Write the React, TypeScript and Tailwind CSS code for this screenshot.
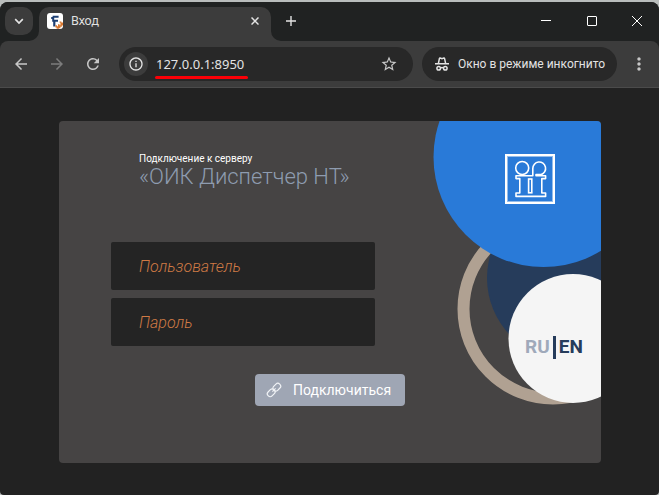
import React, { useState } from 'react';
import {
  MdArrowBack,
  MdArrowForward,
  MdInfoOutline,
  MdMoreVert,
  MdRefresh,
  MdStarBorder,
} from 'react-icons/md';

type Lang = 'ru' | 'en';

function Favicon() {
  return (
    <svg viewBox="0 0 16 16" className="h-4 w-4 shrink-0" aria-hidden="true">
      <rect width="16" height="16" rx="3" fill="#ffffff" />
      <path d="M5.6 2.8h6v2H7.2v2H11v2H8.4v4.6H6.2V8.8H5.2V6H4.2V4h1.4z" fill="#1d3f73" />
      <path d="M8.4 12.2h1.6v1h1v-2h1.6v1h.8v-2.4h-.8V8.6h1.8v1h1.6v3h-1.2v1.2h-1.4v1.4h-1.4v.6H9.6v-1.2H8.4z" fill="#d9772e" />
    </svg>
  );
}

function IncognitoIcon() {
  return (
    <svg viewBox="0 0 14 14" className="h-3.5 w-3.5 shrink-0" fill="none" stroke="currentColor" strokeWidth="1.5" aria-hidden="true">
      <path d="M3.4 6.4L4.4 1.6Q4.6 1 5.2 1.1L7 1.6L8.8 1.1Q9.4 1 9.6 1.6L10.6 6.4" />
      <path d="M0 6.8h14" />
      <circle cx="3.7" cy="11.2" r="1.8" />
      <circle cx="10.3" cy="11.2" r="1.8" />
      <path d="M5.5 10.9q1.5-.9 3 0" />
    </svg>
  );
}

function CompanyLogo() {
  return (
    <svg viewBox="0 0 50 50" className="h-[50px] w-[50px]" fill="none" stroke="#ffffff" aria-hidden="true">
      <rect x="1" y="1" width="48" height="48" strokeWidth="2" />
      <rect x="2.5" y="2.5" width="45" height="45" strokeWidth="1" opacity="0.5" />
      <circle cx="17.2" cy="14" r="6.5" strokeWidth="1.6" />
      <path
        strokeWidth="1.6"
        strokeLinejoin="round"
        d="M31 20.5H36.2A6.4 6.4 0 1 0 27.8 14.5V21.8H11V24.6H14.8V39H11V42.4H40.6V39H36.8V24.6H40.6V21.8H31Z"
      />
      <path d="M31 21h6.5" strokeWidth="2.2" />
      <rect x="23.6" y="25" width="3.2" height="13.8" strokeWidth="1.6" />
    </svg>
  );
}

function ChainIcon() {
  return (
    <svg viewBox="0 0 16 16" className="h-4 w-4 shrink-0" fill="none" stroke="#f1f3f6" strokeWidth="1.2" aria-hidden="true">
      <rect x="6.6" y="2.4" width="8.4" height="5.6" rx="2.6" transform="rotate(-45 10.8 5.2)" />
      <rect x="1" y="8" width="8.4" height="5.6" rx="2.6" transform="rotate(-45 5.2 10.8)" />
      <path d="M6.4 9.6l3.2-3.2" />
    </svg>
  );
}

function TitleBar() {
  return (
    <div className="flex h-[39px] items-start bg-[#202222] pl-[5px] text-[#e3e3e3]">
      <button className="mt-[5px] flex h-7 w-7 items-center justify-center rounded-[10px] bg-[#3c3c3c]" aria-label="Поиск вкладок">
        <svg viewBox="0 0 10 10" className="h-2.5 w-2.5" fill="none" stroke="currentColor" strokeWidth="1.7">
          <path d="M1.2 3.2L5 7l3.8-3.8" />
        </svg>
      </button>
      <div className="relative mt-[5px] ml-[6px] flex h-[34px] w-[232px] items-center rounded-t-[10px] bg-[#3c3c3c] pr-2 pb-[6px] pl-2">
        <svg viewBox="0 0 10 10" className="absolute bottom-0 -left-2.5 h-2.5 w-2.5" aria-hidden="true">
          <path d="M10 0v10H0A10 10 0 0 0 10 0z" fill="#3c3c3c" />
        </svg>
        <svg viewBox="0 0 10 10" className="absolute -right-2.5 bottom-0 h-2.5 w-2.5" aria-hidden="true">
          <path d="M0 0v10h10A10 10 0 0 1 0 0z" fill="#3c3c3c" />
        </svg>
        <Favicon />
        <span className="ml-2 flex-1 text-[12px] leading-4">Вход</span>
        <button className="flex h-4 w-4 items-center justify-center" aria-label="Закрыть вкладку">
          <svg viewBox="0 0 8 8" className="h-2 w-2" stroke="currentColor" strokeWidth="1.5">
            <path d="M.5.5l7 7M7.5.5l-7 7" />
          </svg>
        </button>
      </div>
      <button className="mt-[11px] ml-3 flex h-4 w-4 items-center justify-center" aria-label="Новая вкладка">
        <svg viewBox="0 0 10 10" className="h-2.5 w-2.5" stroke="currentColor" strokeWidth="1.4">
          <path d="M5 0v10M0 5h10" />
        </svg>
      </button>
      <div className="ml-auto flex text-white">
        <button className="flex h-[38px] w-[46px] items-center justify-center" aria-label="Свернуть">
          <svg viewBox="0 0 10 10" className="h-2.5 w-2.5" stroke="currentColor">
            <path d="M0 4.5h10" />
          </svg>
        </button>
        <button className="flex h-[38px] w-[46px] items-center justify-center" aria-label="Развернуть">
          <svg viewBox="0 0 10 10" className="h-2.5 w-2.5" fill="none" stroke="currentColor">
            <rect x=".5" y=".5" width="9" height="9" rx=".5" />
          </svg>
        </button>
        <button className="flex h-[38px] w-[44px] items-center justify-center" aria-label="Закрыть">
          <svg viewBox="0 0 10 10" className="h-2.5 w-2.5" stroke="currentColor">
            <path d="M0 0l10 10M10 0L0 10" />
          </svg>
        </button>
      </div>
    </div>
  );
}

function Toolbar() {
  return (
    <div className="bg-[#202222]">
      <div className="flex h-[47px] items-center rounded-t-lg border-b border-[#4b4b4b] bg-[#3c3c3c] pr-[10px] pl-3 text-[#c7c7c7]">
        <button aria-label="Назад">
          <MdArrowBack size={18} />
        </button>
        <button className="ml-[18px] text-[#7c7c7c]" aria-label="Вперёд">
          <MdArrowForward size={18} />
        </button>
        <button className="ml-[18px]" aria-label="Обновить">
          <MdRefresh size={18} />
        </button>
        <div className="ml-[17px] flex h-[34px] flex-1 items-center rounded-full bg-[#282828] pr-[15px] pl-[5px]">
          <button className="flex h-6 w-6 shrink-0 items-center justify-center rounded-full bg-[#3c3c3c] text-[#e3e3e3]" aria-label="Сведения о сайте">
            <MdInfoOutline size={16} />
          </button>
          <div className="relative ml-2 min-w-0 flex-1">
            <input
              className="block w-full bg-transparent text-[13px] leading-5 text-[#e3e3e3] outline-none"
              aria-label="Адресная строка"
              defaultValue="127.0.0.1:8950"
            />
            <span className="absolute top-[22px] -left-px h-[3px] w-[93px] rounded-full bg-[#fb0007]" />
          </div>
          <button aria-label="Добавить в закладки">
            <MdStarBorder size={18} />
          </button>
        </div>
        <div className="ml-[9px] flex h-[34px] items-center rounded-full bg-[#282828] pr-3 pl-[13px] text-[#e3e3e3]">
          <IncognitoIcon />
          <span className="ml-[9px] font-['Roboto',sans-serif] text-[12px] leading-4 whitespace-nowrap">Окно в режиме инкогнито</span>
        </div>
        <button className="ml-3" aria-label="Меню">
          <MdMoreVert size={20} />
        </button>
      </div>
    </div>
  );
}

function LoginForm() {
  const [user, setUser] = useState('');
  const [password, setPassword] = useState('');
  const inputClass =
    'block h-12 w-full rounded-[2px] bg-[#242424] px-7 text-[16px] font-light italic text-[#cf7a45] outline-none placeholder:text-[#cf7a45]';

  return (
    <form className="w-[346px] pt-8 pl-[52px]" onSubmit={(e) => e.preventDefault()}>
      <h1 className="h-[89px] pl-7">
        <span className="block text-[10px] leading-3 text-white">Подключение к серверу</span>
        <span className="block text-[22px] leading-6 font-light whitespace-nowrap text-[#8e9cb0]">«ОИК Диспетчер НТ»</span>
      </h1>
      <div className="flex w-[264px] flex-col gap-2">
        <input
          className={inputClass}
          placeholder="Пользователь"
          aria-label="Пользователь"
          value={user}
          onChange={(e) => setUser(e.target.value)}
        />
        <input
          className={inputClass}
          type="password"
          placeholder="Пароль"
          aria-label="Пароль"
          value={password}
          onChange={(e) => setPassword(e.target.value)}
        />
      </div>
      <button type="submit" className="mt-7 ml-auto flex h-8 w-[150px] items-center gap-[11px] rounded bg-[#9fa6b4] pl-[11px] text-[14px] leading-5 text-white">
        <ChainIcon />
        Подключиться
      </button>
    </form>
  );
}

function SidePanel() {
  const [lang, setLang] = useState<Lang>('en');

  return (
    <div className="relative ml-auto h-[342px] w-[168px] shrink-0">
      <svg viewBox="374 0 168 342" className="absolute inset-0 h-full w-full" aria-hidden="true" overflow="visible">
        <circle cx="494" cy="188" r="89.5" fill="none" stroke="#b0a192" strokeWidth="12" />
        <circle cx="510.5" cy="157" r="82.5" fill="#263c5b" />
        <circle cx="484.5" cy="36" r="110" fill="#297ad8" />
        <circle cx="514" cy="217.5" r="64.5" fill="#f5f5f5" />
      </svg>
      <div className="relative flex flex-col pt-8 pl-[72px]">
        <div className="pt-px">
          <CompanyLogo />
        </div>
        <div className="mt-[131px] ml-5 flex items-center gap-[3px] text-[19px] leading-6 font-bold">
          <button className={lang === 'ru' ? 'text-[#263c5b]' : 'text-[#9fa9ba]'} onClick={() => setLang('ru')}>
            RU
          </button>
          <span className="h-[23px] w-[3px] bg-[#263c5b]" />
          <button className={lang === 'en' ? 'text-[#263c5b]' : 'text-[#9fa9ba]'} onClick={() => setLang('en')}>
            EN
          </button>
        </div>
      </div>
    </div>
  );
}

export default function App() {
  return (
    <div className="flex min-h-screen flex-col bg-[#b9bdbc] pt-[2px] font-['Noto_Sans',sans-serif]">
      <div className="flex flex-1 flex-col overflow-hidden rounded-t-lg rounded-b bg-[#222222]">
        <TitleBar />
        <Toolbar />
        <main className="flex-1 pt-[33px] pr-[58px] pb-8 pl-[59px] font-['Roboto',sans-serif]">
          <div className="flex overflow-hidden rounded bg-[#464444]">
            <LoginForm />
            <SidePanel />
          </div>
        </main>
      </div>
    </div>
  );
}
